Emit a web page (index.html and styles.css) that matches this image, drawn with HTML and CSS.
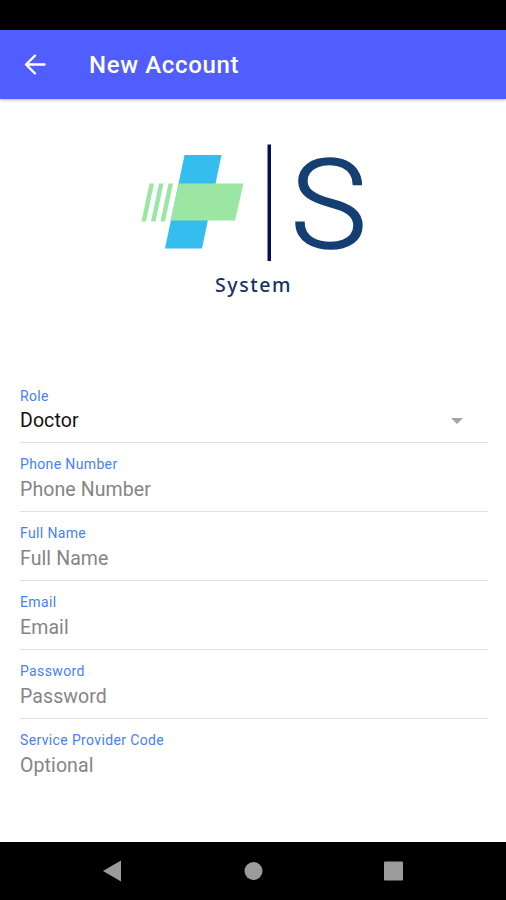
FILE: index.html
```html
<!DOCTYPE html>
<html lang="en">
<head>
<meta charset="utf-8">
<title>New Account</title>
<link rel="stylesheet" href="styles.css">
</head>
<body>
<div class="status"></div>
<header class="bar">
  <svg class="back" width="24" height="24" viewBox="0 0 24 24"><path d="M12 2.700 3 11.500l9 9M3.500 11.500H21.500"/></svg>
  <h1>New Account</h1>
</header>
<main>
  <svg class="logo" width="506" height="275" viewBox="0 99 506 275">
    <path fill="#35bdef" d="M184.500 155H221.500L202 248.500H165Z"/>
    <path fill="#9ce6a3" d="M178.500 183.500H243.500L235 220.500H170.500ZM149.500 183.500h4.500l-8 38h-4.500ZM159 183.500h4.500l-8 38h-4.500ZM168.500 183.500h4.500l-8 38h-4.500Z"/>
    <path fill="#00115b" d="M267.500 144.500h3.500V261h-3.500Z"/>
    <text class="letter" transform="translate(290.500 247.500) scale(1.040 1)">S</text>
    <text class="system" x="215" y="292" textLength="75.500">System</text>
  </svg>
  <form class="fields">
    <label class="field"><span>Role</span><b class="chosen">Doctor</b><i class="caret"></i></label>
    <label class="field"><span>Phone Number</span><input placeholder="Phone Number"></label>
    <label class="field"><span>Full Name</span><input placeholder="Full Name"></label>
    <label class="field"><span>Email</span><input placeholder="Email"></label>
    <label class="field"><span>Password</span><input placeholder="Password"></label>
    <label class="field"><span>Service Provider Code</span><input placeholder="Optional"></label>
  </form>
</main>
<nav class="nav">
  <svg width="506" height="58" viewBox="0 842 506 58" fill="#9b9b9b"><path d="M103 871 121 860.500V881.500Z"/><circle cx="253.500" cy="871" r="9"/><rect x="384" y="861.500" width="19" height="19" rx="1"/></svg>
</nav>
</body>
</html>
```
FILE: styles.css
```css
* { box-sizing: border-box; }
body { margin: 0; width: 506px; height: 900px; display: flex; flex-direction: column; background: #fff; font-family: Roboto, sans-serif; overflow: hidden; }
.status { height: 30px; background: #000; }
.bar { height: 69px; display: flex; align-items: center; padding-left: 23px; background: #505eff; box-shadow: 0 1px 3px rgba(0,0,0,.3); color: #fff; }
.back { fill: none; stroke: #fff; stroke-width: 2.4; stroke-linecap: round; stroke-linejoin: round; }
h1 { margin: 0 0 0 42px; font-size: 24px; font-weight: 500; line-height: 30px; letter-spacing: .65px; }
main { flex: 1; }
.logo { display: block; }
.letter { font: 300 124px Roboto, sans-serif; fill: #143f73; stroke: #143f73; stroke-width: 1.6; }
.system { font: 500 19.5px "Noto Sans", sans-serif; fill: #173265; }
.fields { padding: 0 18px 0 20px; }
.field { display: grid; grid-template: 20px 32px / 1fr auto; height: 69px; padding-top: 11px; border-bottom: 1.5px solid #e0e0e0; align-items: center; }
.field:last-child { border: 0; }
.field span { grid-column: 1 / -1; color: #4482f5; font-size: 14px; line-height: 20px; letter-spacing: .36px; }
.field:first-child span { padding-top: 1px; }
.chosen, .field input { font: 400 19.5px/32px Roboto, sans-serif; color: #111; letter-spacing: .1px; }
.field input { grid-column: 1 / -1; width: 100%; height: 32px; padding: 0; border: 0; outline: 0; background: none; }
.field input::placeholder { color: #858585; opacity: 1; }
.caret { margin-right: 25px; border: 6px solid transparent; border-top-color: #a4a4a4; border-bottom: 0; }
.nav { height: 58px; background: #000; }
.nav svg { display: block; }
```
